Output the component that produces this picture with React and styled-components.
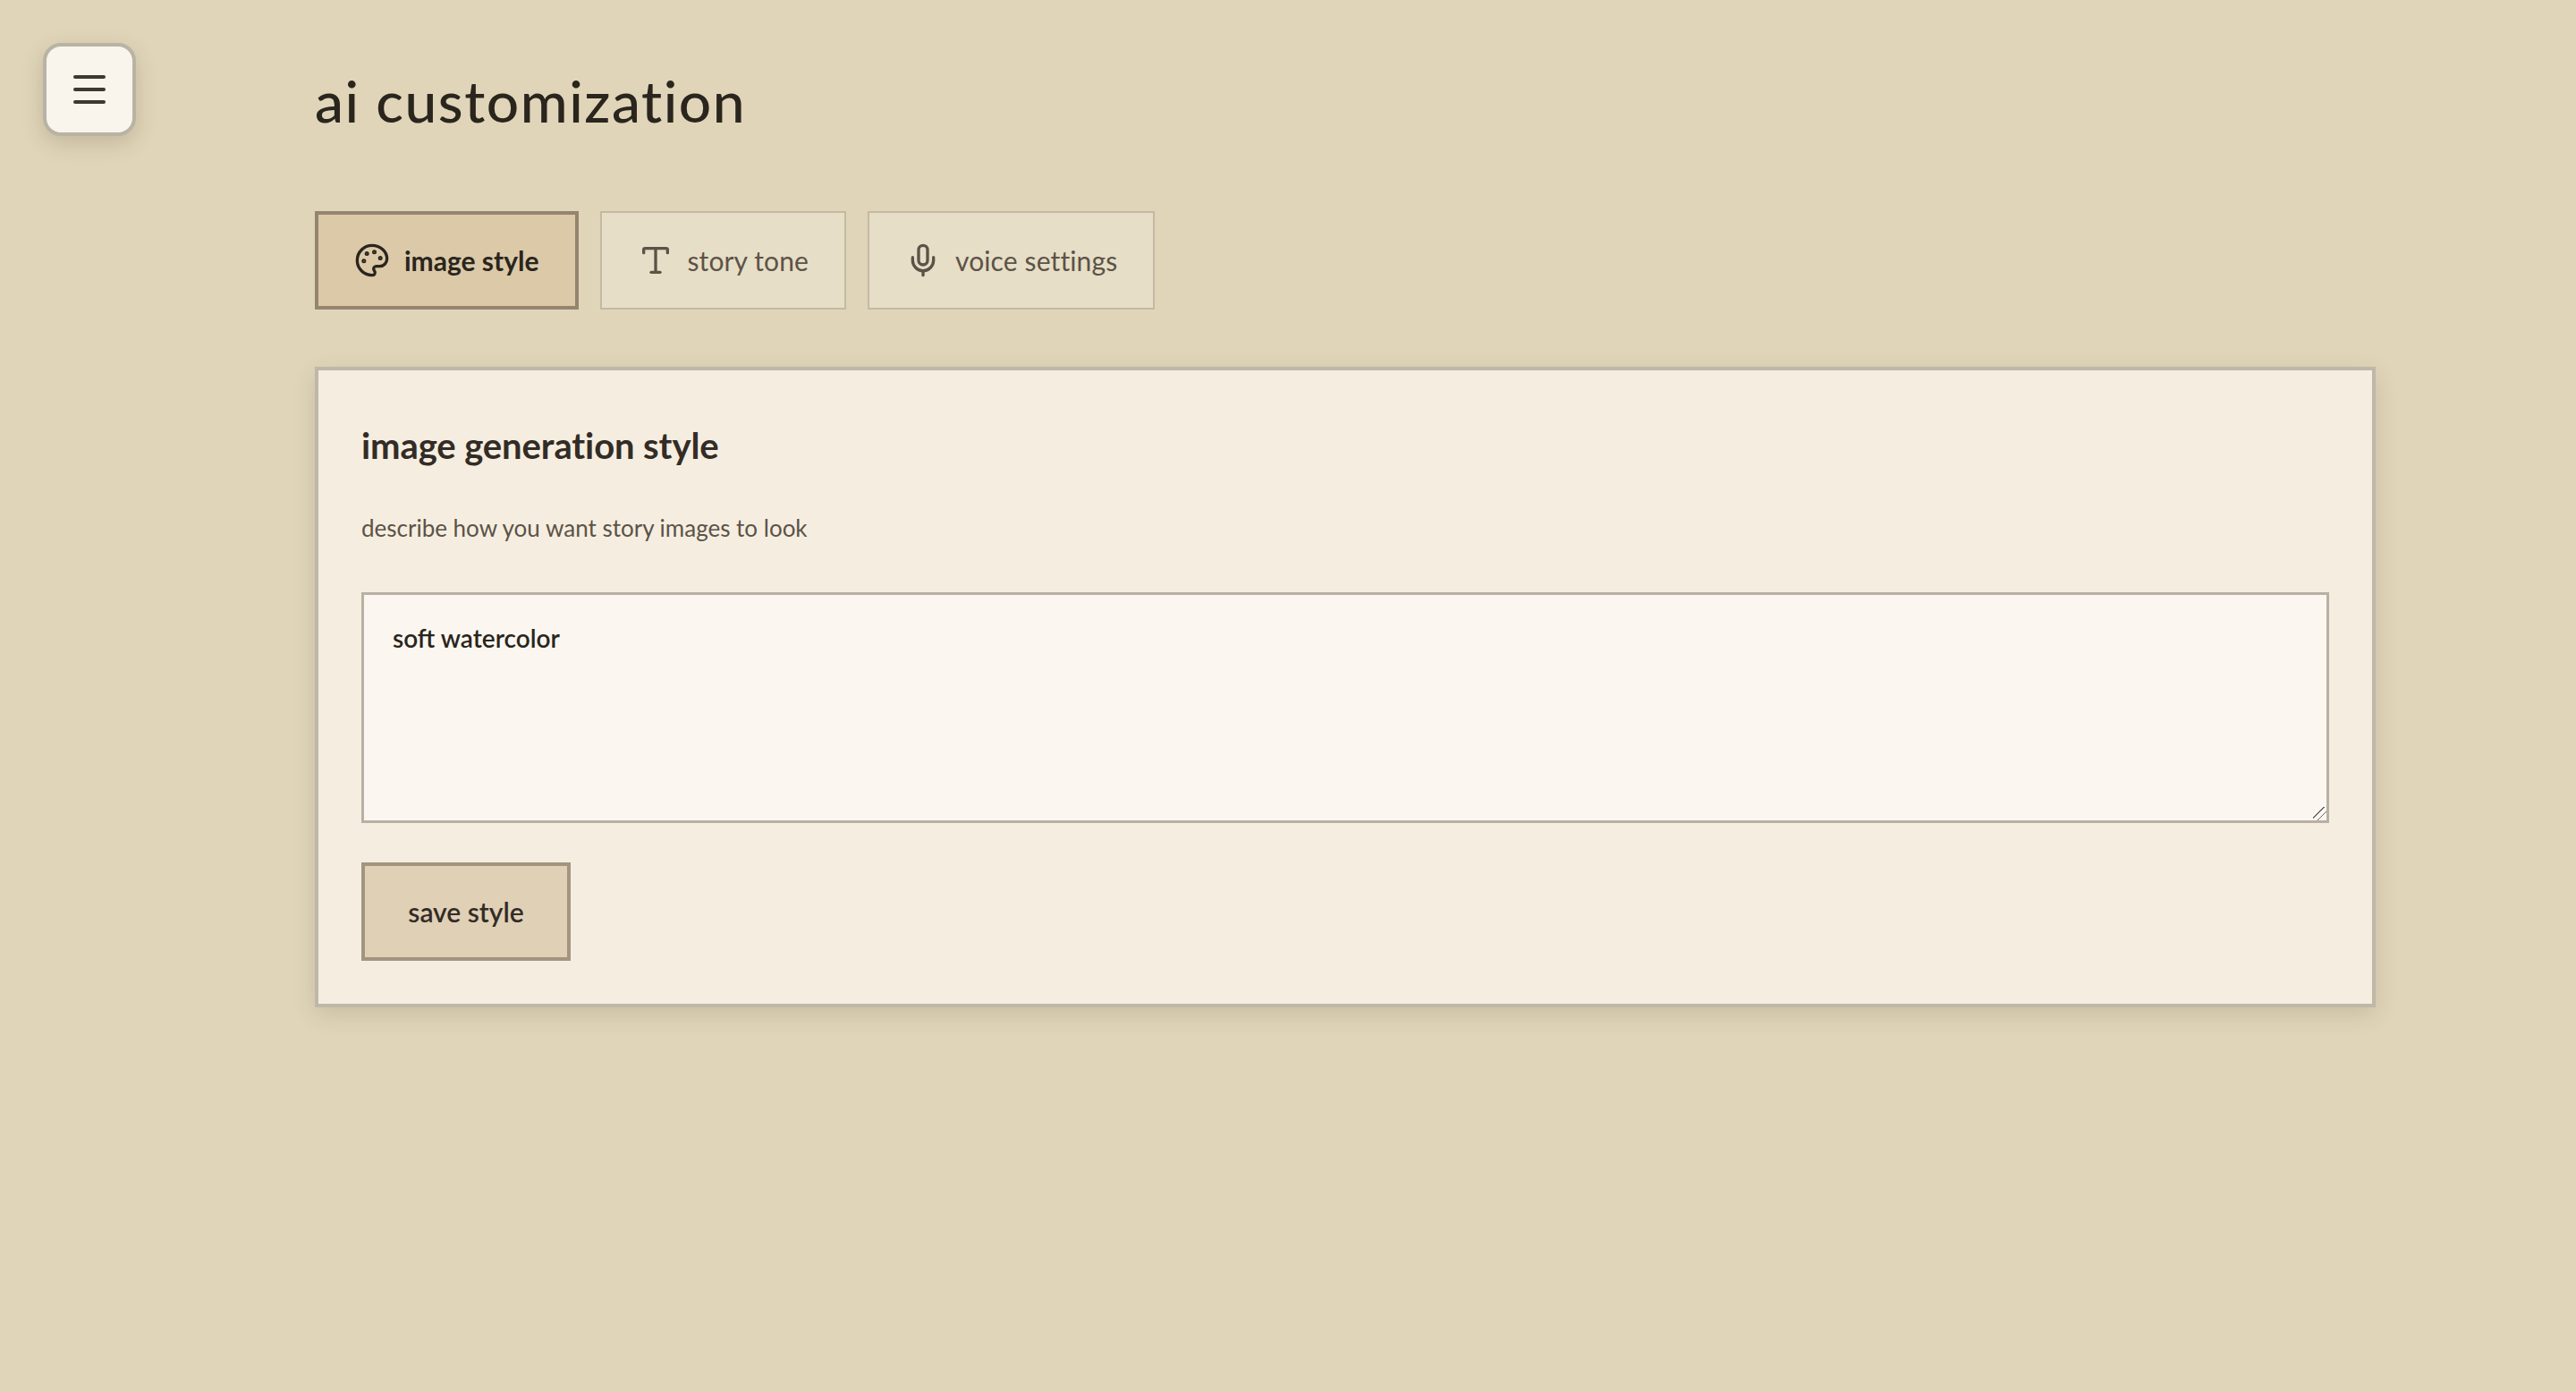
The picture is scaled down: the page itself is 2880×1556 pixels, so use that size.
import React from 'react'
import styled, {createGlobalStyle} from 'styled-components'
import {Menu, Mic, Palette, Type} from 'lucide-react'

const GlobalStyle = createGlobalStyle`
  html, body {
    margin: 0;
    background: #e0d5b9;
  }

  body {
    font-family: Lato, "Noto Sans", sans-serif;
    color: #2a251d;
  }
`

const MenuButton = styled.button`
  position: fixed;
  top: 48px;
  left: 48px;
  width: 104px;
  height: 104px;
  padding: 0;
  display: flex;
  align-items: center;
  justify-content: center;
  border: 4px solid #b9b3a5;
  border-radius: 20px;
  background: #f9f5ec;
  color: #3d3930;
  box-shadow: 0 8px 24px rgba(60, 50, 30, 0.18);
`

const Page = styled.main`
  box-sizing: border-box;
  min-height: 100vh;
  padding: 64px 224px 64px 352px;
`

const Title = styled.h1`
  margin: 0 0 76px;
  height: 96px;
  font-size: 64px;
  line-height: 98px;
  font-weight: 500;
  letter-spacing: 1.55px;
  color: #2a251d;
`

const Tabs = styled.div`
  display: flex;
  gap: 24px;
  margin-bottom: 64px;
`

const Tab = styled.button`
  box-sizing: border-box;
  height: 110px;
  padding: 0 40px;
  display: flex;
  align-items: center;
  gap: 16px;
  font-family: inherit;
  font-size: 30px;
  letter-spacing: ${p => (p.$active ? '0' : '0.12px')};
  border: ${p => (p.$active ? '4px solid #958570' : '2px solid #c3baa4')};
  background: ${p => (p.$active ? '#dbc9a8' : '#e6dec6')};
  color: ${p => (p.$active ? '#2a251d' : '#5c5248')};
  font-weight: ${p => (p.$active ? 700 : 400)};
`

const Card = styled.section`
  box-sizing: border-box;
  height: 716px;
  padding: 48px;
  border: 4px solid #bfb8a9;
  background: #f5eee0;
  box-shadow: 0 8px 24px rgba(60, 50, 30, 0.14);
`

const CardTitle = styled.h2`
  margin: 0 0 34px;
  font-size: 40px;
  line-height: 72px;
  font-weight: 700;
  letter-spacing: -0.1px;
  color: #332c26;
`

const CardText = styled.p`
  margin: 0 0 50px;
  font-size: 26px;
  line-height: 44px;
  color: #5c5248;
`

const StyleInput = styled.textarea`
  display: block;
  box-sizing: border-box;
  width: 100%;
  height: 258px;
  margin: 0 0 44px;
  padding: 26px 32px;
  border: 3px solid #b8b0a3;
  border-radius: 0;
  outline: none;
  background: #fbf7f0;
  font-family: inherit;
  font-size: 28px;
  font-weight: 600;
  line-height: 44px;
  color: #2a251d;

  &::-webkit-resizer {
    background: linear-gradient(
      135deg,
      transparent 40%,
      #6a6a6a 40%,
      #6a6a6a 46%,
      transparent 46%,
      transparent 64%,
      #6a6a6a 64%,
      #6a6a6a 70%,
      transparent 70%
    );
  }
`

const SaveButton = styled.button`
  box-sizing: border-box;
  width: 234px;
  height: 110px;
  padding: 0;
  border: 4px solid #a39480;
  background: #e0d0b6;
  font-family: inherit;
  font-size: 30px;
  font-weight: 600;
  color: #332c26;
`

const App = () => {
  return (
    <>
      <GlobalStyle/>
      <MenuButton aria-label="menu"><Menu size={48}/></MenuButton>
      <Page>
        <Title>ai customization</Title>
        <Tabs>
          <Tab $active><Palette size={40}/>image style</Tab>
          <Tab><Type size={40}/>story tone</Tab>
          <Tab><Mic size={40}/>voice settings</Tab>
        </Tabs>
        <Card>
          <CardTitle>image generation style</CardTitle>
          <CardText>describe how you want story images to look</CardText>
          <StyleInput defaultValue="soft watercolor"/>
          <SaveButton>save style</SaveButton>
        </Card>
      </Page>
    </>
  )
}

export default App
